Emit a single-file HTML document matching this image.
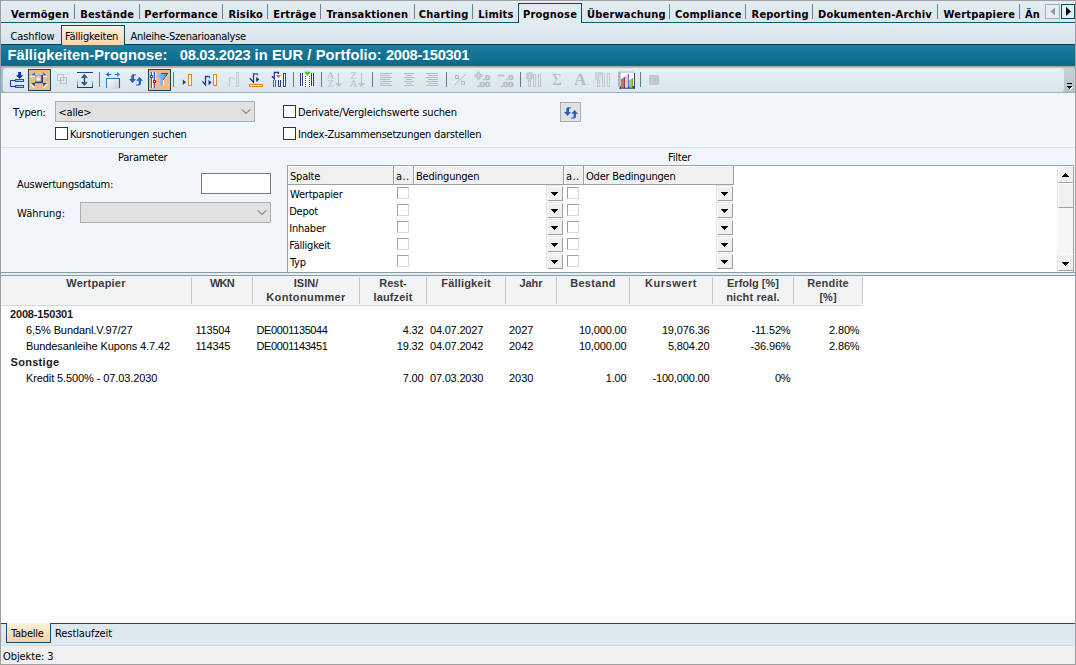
<!DOCTYPE html>
<html lang="de">
<head>
<meta charset="utf-8">
<title>Fälligkeiten-Prognose</title>
<style>
*{box-sizing:border-box;margin:0;padding:0}
html,body{width:1076px;height:665px;overflow:hidden}
body{position:relative;background:#f1f6fa;font-family:"DejaVu Sans Condensed","Liberation Sans",sans-serif;font-size:11px;letter-spacing:-0.22px;color:#000;line-height:13px}
.abs{position:absolute}
.t{position:absolute;white-space:pre}
/* frame */
#bl{left:0;top:0;width:1px;height:665px;background:#989ea2}
#bt{left:0;top:0;width:1076px;height:1px;background:#a0a0a0}
#br{left:1075px;top:0;width:1px;height:665px;background:#a0a0a0}
#bb{left:0;top:664px;width:1076px;height:1px;background:#a0a0a0}
/* main tabs */
#tabs{left:1px;top:1px;width:1074px;height:21px;background:linear-gradient(#e3edf2,#dbe7ed)}
#tabline{left:1px;top:22px;width:1074px;height:1px;background:#0f5a70}
.mt{position:absolute;top:8px;font-weight:bold;letter-spacing:0.2px;white-space:pre}
.ms{position:absolute;top:4px;width:1px;height:15px;background:#68848f}
#seltab{left:518px;top:3px;width:64px;height:20px;background:linear-gradient(#dfeaef,#e2edf2);border:1px solid #0f4a5c;border-bottom:none}
/* sub tabs */
#sub{left:1px;top:23px;width:1074px;height:21px;background:linear-gradient(#e2edf2,#d6e3ea)}
#subsel{left:61px;top:25px;width:64px;height:20px;border:1px solid #0f4a5c;border-bottom:none;background:linear-gradient(#fdf3e3,#f8d2ae)}
/* title */
#title{left:1px;top:44px;width:1074px;height:22px;background:linear-gradient(#1f7c9c,#066a8b);border-top:1px solid #06425c}
#title span{position:absolute;left:6.4px;top:1.6px;font-family:"Liberation Sans",sans-serif;font-weight:bold;font-size:14.67px;letter-spacing:0;color:#fff;white-space:pre;line-height:17px}
/* toolbar */
#tbbg{left:1px;top:66px;width:1074px;height:27px;background:#9dbfcf;border-top:1px solid #a9afb2}
#tb{left:3px;top:68px;width:1061px;height:24px;background:linear-gradient(#e6eff4,#dae6ed);border-radius:3px}
#tbov{left:1062px;top:68px;width:13px;height:24px;background:linear-gradient(#c6d2d8,#b4c0c6);border-radius:0 3px 3px 0}
#tbline{left:1px;top:92px;width:1074px;height:1px;background:#a3b1b9}
.sep{position:absolute;top:71px;width:1px;height:18px;background:#5f7f8c}
.ic{position:absolute;top:72px;width:16px;height:16px}
.selb{position:absolute;top:69px;width:23px;height:22px;background:#f2b988;border:1px solid #0f4a5c}

.cb{position:absolute;width:13px;height:13px;background:#fff;border:1px solid #333}
.combo{position:absolute;background:#e1e1e1;border:1px solid #adadad}
.hline{position:absolute;height:1px;background:#d5dee2}
#grid{left:287px;top:165px;width:787px;height:107px;border-right:1px solid #a0a0a0;background:#fff;border-left:1px solid #a0a0a0;border-top:1px solid #a0a0a0}
.gh{position:absolute;top:166px;height:19px;background:#f0f0f0;border-right:1px solid #a0a0a0;border-bottom:1px solid #a0a0a0;box-shadow:inset 1px 1px 0 #fff;padding:5px 0 0 2px;line-height:11px;white-space:pre;overflow:hidden}
.gt{position:absolute;left:290px;white-space:pre}
.gc{position:absolute;width:12px;height:12px;background:#fff;border:1px solid #d9d9d9;border-top-color:#a0a0a0;border-left-color:#a0a0a0}
.gd{position:absolute;width:16px;height:15px;background:#f0f0f0;border:1px solid #a0a0a0;border-top-color:#fff;border-left-color:#fff;box-shadow:-1px -1px 0 #e3e3e3}
.gd:after{content:"";position:absolute;left:3px;top:5px;width:7px;height:4px;background:linear-gradient(#000,#000) 0 0/7px 1px no-repeat,linear-gradient(#000,#000) 1px 1px/5px 1px no-repeat,linear-gradient(#000,#000) 2px 2px/3px 1px no-repeat,linear-gradient(#000,#000) 3px 3px/1px 1px no-repeat}
#sbu,#thumb,#sbd{box-shadow:-1px 0 0 #e3e3e3}#sbu:after{left:3px;top:6px;transform:scaleY(-1)}#sbd:after{left:3px;top:7px}
#thumb:after{display:none}
#split1{left:1px;top:272px;width:1074px;height:1px;background:#8b9a9f}
#split2{left:1px;top:273px;width:1074px;height:2px;background:#e3eef4}
#split3{left:1px;top:275px;width:1074px;height:1px;background:#8e9da3}
#tbl{left:1px;top:276px;width:1074px;height:347px;background:#fff}
#thead{left:1px;top:276px;width:862px;height:29px;background:#f2f3f5}
#theadline{left:1px;top:305px;width:862px;height:1px;background:#d5d8da}
.th{position:absolute;font-family:"Liberation Sans",sans-serif;font-weight:bold;font-size:11px;letter-spacing:0;color:#3c3c3c;text-align:center;white-space:pre;line-height:14px;top:276px}
.cs{position:absolute;top:277px;width:1px;height:27px;background:#c6c6c6}
.td{position:absolute;font-family:"Liberation Sans",sans-serif;font-size:11px;letter-spacing:0;color:#000;white-space:pre;line-height:14px}
.gr{font-weight:bold;color:#1a1a1a}
#btabs{left:1px;top:623px;width:1074px;height:22px;background:#dde9ef;border-top:1px solid #0f5068}
#bsel{left:6px;top:623px;width:45px;height:20px;border:1px solid #0f5068;border-top:none;background:linear-gradient(#fdf1de,#f8cfa6)}
#status{left:1px;top:645px;width:1074px;height:19px;background:#f0f0f0;border-top:1px solid #d9dcde}
</style>
</head>
<body>
<div class="abs" id="tabs"></div>
<div class="abs" id="tabline"></div>
<div class="abs" id="sub"></div>
<div class="abs" id="seltab"></div>
<div class="abs" id="title"><span><b style="letter-spacing:0.1px">Fälligkeiten-Prognose:</b>   <b style="letter-spacing:-0.28px">08.03.2023</b><b style="letter-spacing:0.1px"> in EUR / Portfolio: </b><b style="letter-spacing:-0.3px">2008-150301</b></span></div>
<div class="abs" id="subsel"></div>
<div class="abs" id="tbbg"></div>
<div class="abs" id="tbov"></div><div class="abs" id="tb"></div>
<div class="abs" id="tbline"></div>
<span class="mt" style="left:11.0px">Vermögen</span>
<span class="mt" style="left:80.2px">Bestände</span>
<span class="mt" style="left:144.3px">Performance</span>
<span class="mt" style="left:228.4px">Risiko</span>
<span class="mt" style="left:273.2px">Erträge</span>
<span class="mt" style="left:326.5px">Transaktionen</span>
<span class="mt" style="left:418.8px">Charting</span>
<span class="mt" style="left:478.3px">Limits</span>
<span class="mt" style="left:523px">Prognose</span>
<span class="mt" style="left:587.0px">Überwachung</span>
<span class="mt" style="left:675.0px">Compliance</span>
<span class="mt" style="left:751.6px">Reporting</span>
<span class="mt" style="left:818.0px">Dokumenten-Archiv</span>
<span class="mt" style="left:943.5px">Wertpapiere</span>
<span class="mt" style="left:1025.0px">Än</span>
<div class="ms" style="left:74px"></div>
<div class="ms" style="left:139px"></div>
<div class="ms" style="left:222px"></div>
<div class="ms" style="left:267px"></div>
<div class="ms" style="left:320px"></div>
<div class="ms" style="left:414px"></div>
<div class="ms" style="left:472px"></div>
<div class="ms" style="left:669px"></div>
<div class="ms" style="left:745px"></div>
<div class="ms" style="left:812px"></div>
<div class="ms" style="left:937px"></div>
<div class="ms" style="left:1019px"></div>
<span class="t" style="left:10.5px;top:30px;letter-spacing:-0.1px">Cashflow</span>
<span class="t" style="left:65px;top:30px">Fälligkeiten</span>
<span class="t" style="left:130.5px;top:30px;letter-spacing:-0.27px">Anleihe-Szenarioanalyse</span>
<div class="abs" style="left:1045px;top:4px;width:15px;height:15px;border:1px solid #a8b0b4;background:#e4edf2"></div>
<div class="abs" style="left:1061px;top:4px;width:14px;height:15px;border:1px solid #0f4a5c;background:#e4edf2"></div>
<svg class="abs" style="left:1045px;top:4px" width="30" height="15" viewBox="0 0 30 15"><path d="M10 3.5 L5.5 7.5 L10 11.5Z" fill="#9a9a9a"/><path d="M21 3 L26 7.5 L21 12Z" fill="#000"/></svg>

<div class="selb" style="left:28px"></div>
<div class="selb" style="left:148px"></div>
<svg class="abs" style="left:0;top:0" width="1076" height="100" viewBox="0 0 1076 100" shape-rendering="auto">
<defs>
<linearGradient id="gbar" x1="0" y1="0" x2="1" y2="0"><stop offset="0" stop-color="#7db8ff"/><stop offset="1" stop-color="#c4e2ff"/></linearGradient>
<linearGradient id="gsq" x1="0" y1="0" x2="1" y2="1"><stop offset="0" stop-color="#8f9bb5"/><stop offset="0.5" stop-color="#e6e9f2"/><stop offset="1" stop-color="#aab3c8"/></linearGradient>
<linearGradient id="gbox" x1="0" y1="0" x2="1" y2="1"><stop offset="0" stop-color="#ffffff"/><stop offset="1" stop-color="#c9cbe0"/></linearGradient>
<linearGradient id="gfun" x1="0" y1="0" x2="1" y2="0"><stop offset="0" stop-color="#a8d4fa"/><stop offset="1" stop-color="#4a8cd8"/></linearGradient>
<linearGradient id="gfade" x1="0" y1="0" x2="0" y2="1"><stop offset="0" stop-color="#c9d6ee"/><stop offset="1" stop-color="#1f3a6e"/></linearGradient>
<radialGradient id="gsq2" cx="0.55" cy="0.6" r="0.7"><stop offset="0" stop-color="#ffffff"/><stop offset="0.5" stop-color="#c4cbdc"/><stop offset="1" stop-color="#8e9abb"/></radialGradient>
<linearGradient id="gtri" x1="0" y1="0" x2="0" y2="1"><stop offset="0" stop-color="#2f9fdc"/><stop offset="0.7" stop-color="#2a78b0"/><stop offset="1" stop-color="#22406f"/></linearGradient>
<linearGradient id="gtri2" x1="0" y1="0" x2="0" y2="1"><stop offset="0" stop-color="#243f70"/><stop offset="0.35" stop-color="#2a5f98"/><stop offset="1" stop-color="#2f9fdc"/></linearGradient>
<linearGradient id="garr" x1="0" y1="0" x2="1" y2="0"><stop offset="0" stop-color="#253c6a"/><stop offset="1" stop-color="#2b82ba"/></linearGradient>
<linearGradient id="gbx" gradientUnits="userSpaceOnUse" x1="106" y1="0" x2="120" y2="0"><stop offset="0" stop-color="#2a86d8"/><stop offset="1" stop-color="#2a58a8"/></linearGradient>
<linearGradient id="gsqrt" gradientUnits="userSpaceOnUse" x1="202" y1="0" x2="210" y2="0"><stop offset="0" stop-color="#1f3a80"/><stop offset="0.6" stop-color="#1f3f88"/><stop offset="1" stop-color="#2a86b8"/></linearGradient>
<linearGradient id="gsqrt2" gradientUnits="userSpaceOnUse" x1="249" y1="0" x2="258" y2="0"><stop offset="0" stop-color="#1f3a80"/><stop offset="0.6" stop-color="#1f3f88"/><stop offset="1" stop-color="#2a86b8"/></linearGradient>
</defs>
<!-- separators -->
<g fill="#5a7f8c">
<rect x="99" y="72" width="1" height="15"/><rect x="173" y="72" width="1" height="15"/><rect x="293" y="72" width="1" height="15"/><rect x="321" y="72" width="1" height="15"/><rect x="372" y="72" width="1" height="15"/><rect x="446" y="72" width="1" height="15"/><rect x="520" y="72" width="1" height="15"/><rect x="640" y="72" width="1" height="15"/>
</g>
<!-- icon1 -->
<g>
<path d="M18.2 72h2.8v3.2h2.3l-3.7 3.6L15.9 75.2h2.3z" fill="#0c2cb0"/>
<path d="M15.5 80.5H10.5V86.5H15.5" fill="none" stroke="#1030b8" stroke-width="1"/>
<rect x="15.5" y="79.5" width="8" height="2" fill="url(#gbar)" stroke="#1f4fd0" stroke-width="1"/>
<rect x="15.5" y="85.5" width="8" height="2" fill="url(#gbar)" stroke="#1f4fd0" stroke-width="1"/>
</g>
<!-- icon2 -->
<g>
<rect x="35" y="75" width="8" height="8.2" fill="#2b4070"/>
<rect x="35" y="75" width="6.3" height="6.6" fill="url(#gsq2)"/>
<path d="M35 72v3.6h-3.9z" fill="url(#gtri)"/><path d="M43 72v3.6h3.9z" fill="url(#gtri)"/>
<rect x="31" y="75.6" width="4" height="1.2" fill="#fff"/><rect x="43" y="75.6" width="4" height="1.2" fill="#fff"/>
<path d="M31 83h4v4.3z" fill="url(#gtri2)"/><path d="M47 83h-4v4.3z" fill="url(#gtri2)"/>
<path d="M30.8 83.9l3.9 4.1M47.2 83.9l-3.9 4.1" stroke="#fff" stroke-width="1.2"/>
</g>
<!-- icon3 disabled -->
<g fill="none" stroke="#b9c1c5" stroke-width="1">
<rect x="57.5" y="74.5" width="6" height="6"/><rect x="60.5" y="77.5" width="6" height="6"/>
<path d="M56 72.5l1.2 1.2M68 72.5l-1.2 1.2M56 86l1.2-1.2M68 86l-1.2-1.2" stroke="#c9d0d3"/>
</g>
<!-- icon4 -->
<g>
<rect x="77" y="72" width="16" height="1" fill="#27406f"/>
<path d="M84.5 73.8l3.5 4.2h-2.7v4h2.7l-3.5 4l-3.5-4h2.7v-4h-2.7z" fill="url(#garr)"/>
<rect x="77" y="80" width="1" height="8" fill="url(#gfade)"/><rect x="92" y="80" width="1" height="8" fill="url(#gfade)"/>
<rect x="77" y="87" width="16" height="1" fill="#1f3a6e"/>
</g>
<!-- icon5 -->
<g>
<rect x="106.5" y="78.5" width="13" height="10" fill="url(#gbox)" stroke="none"/>
<path d="M106.5 88V78.5H119.5V88" fill="none" stroke="url(#gbx)" stroke-width="1.1"/>
<path d="M106 74.5l2.8-2.5v2h2.4v1h-2.4v2z" fill="#2a5cc4"/>
<path d="M120 74.5l-2.8-2.5v2h-2.4v1h2.4v2z" fill="#2a7cd8"/>
</g>
<!-- icon6 -->
<g fill="#2a5cc8" transform="translate(-435,-33)"><path d="M571 107.3H568.3Q566.3 107.3 566.3 109.3V112H564L567.5 116L571 112H569V109.5Q569 108.4 570 108.3H571Z"/><path d="M571 118.5H573.8Q576 118.5 576 116.3V113.7H578L574.6 110L571.2 113.7H573.7V116.3Q573.7 117.4 572.7 117.5H571Z"/></g>
<!-- icon7 -->
<g>
<path d="M152.5 72v16M155.5 72v11" stroke="#fff" stroke-width="0.8"/>
<path d="M151.5 72v16M154.5 72v16" stroke="#2a5fd0" stroke-width="1"/>
<path d="M168.7 73.7L163.4 80.7V85" fill="none" stroke="#fff" stroke-width="0.9"/>
<path d="M155 73H168L163 80V84.5L161.5 86L160.3 84.8V80Z" fill="url(#gfun)"/>
<path d="M161 73.4H168L163.2 80" fill="none" stroke="#2b4a80" stroke-width="0.9"/>
<rect x="150.5" y="75.5" width="2" height="2" fill="#fff" stroke="#2a5fd0" stroke-width="1"/>
<rect x="153.5" y="80.5" width="2" height="2" fill="#fff" stroke="#e81010" stroke-width="1"/>
</g>
<!-- icon8 -->
<g>
<path d="M182.8 79.5l3.2 2.750l-3.2 2.750z" fill="#26366e"/>
<rect x="188.5" y="74.5" width="3" height="11" fill="#fff" stroke="#e8820c" stroke-width="1"/>
</g>
<!-- icon9 -->
<g>
<path d="M202.4 81.3L205.5 85V76.5H209.5V78.2" fill="none" stroke="url(#gsqrt)" stroke-width="1.3"/>
<path d="M208.5 79.8l3.2 2.700l-3.2 2.700z" fill="#26366e"/>
<rect x="213.5" y="74.5" width="3" height="11" fill="#fff" stroke="#e8820c" stroke-width="1"/>
</g>
<!-- icon10 disabled -->
<g fill="none" stroke="#c3cacd" stroke-width="1">
<path d="M226.3 82.5L229.5 86.3V77.9H233.5V79.5"/><rect x="236.5" y="72.5" width="2" height="14"/>
</g>
<!-- icon11 -->
<g>
<path d="M249.8 78.3L253.5 82.3V73.9H257.5V75.6" fill="none" stroke="url(#gsqrt2)" stroke-width="1.3"/>
<path d="M256.2 76.8l3.2 2.700l-3.2 2.700z" fill="#26366e"/>
<rect x="249.5" y="84.5" width="13" height="2" fill="#fff" stroke="#e8820c" stroke-width="1"/>
</g>
<!-- icon12 -->
<g>
<rect x="272" y="71.5" width="10" height="8.5" fill="#f6f6fb"/>
<path d="M272 76.3L274.3 78.8V72.5H278.5V74" fill="none" stroke="#1a30b0" stroke-width="1.3"/>
<path d="M276 75h5l-2.5 3z" fill="#d86a10"/>
<path d="M273.5 80v7M275.5 80v7" stroke="#4a6496" stroke-width="1"/>
<path d="M278.5 80v6.5h2V80" fill="none" stroke="#2b3a78"/>
<rect x="283.5" y="73.5" width="2" height="13" fill="#fff" stroke="#3a4c88"/>
</g>
<!-- icon13 -->
<g>
<rect x="300" y="73" width="14" height="14" fill="#fff"/>
<path d="M300.5 73v13M302.5 73v13M311.5 73v13M313.5 73v13" stroke="#2b3a70" stroke-width="1"/>
<path d="M305.5 76v11M309.5 76v11" stroke="#2b3a70" stroke-width="1" stroke-dasharray="1 1"/>
<path d="M304 71.8h7l-3.5 4.200z" fill="#4cc828"/>
</g>
<!-- icon14/15 disabled sort -->
<g fill="#b9c1c4" font-family="Liberation Serif, serif" font-size="10.5">
<text x="326.8" y="78.8">A</text><text x="327.6" y="86.8" font-size="10">Z</text>
<path d="M338 73h1v10.3h3l-3.5 3.7l-3.5-3.7h3z"/>
<text x="350.5" y="79" font-size="10">Z</text><text x="349.8" y="86.8">A</text>
<path d="M361 73h1v10.3h3l-3.5 3.7l-3.5-3.7h3z"/>
</g>
<!-- align icons -->
<g stroke="#b3bbbf" stroke-width="1">
<path d="M380 73.5h12M380 75.5h10M380 77.5h12M380 79.5h10M380 81.5h12M380 83.5h10M380 85.5h12"/>
<path d="M404 73.5h10M406 75.5h6M404 77.5h10M406 79.5h6M404 81.5h10M406 83.5h6M404 85.5h10"/>
<path d="M426 73.5h12M428 75.5h10M426 77.5h12M428 79.5h10M426 81.5h12M428 83.5h10M426 85.5h12"/>
</g>
<!-- percent -->
<g fill="none" stroke="#b3bbbf" stroke-width="1">
<rect x="455.5" y="75.5" width="3" height="3"/><rect x="461.5" y="81.5" width="3" height="3"/><path d="M454 85.5l12-11.5"/>
</g>
<!-- +.0 / -.0 -->
<g fill="#b2babe" stroke="#b2babe" stroke-width="0.35" font-family="Liberation Sans, sans-serif" font-size="8" font-weight="bold">
<path d="M477.3 72.2h2.4v2.3h2.3v2.4h-2.3v2.3h-2.4v-2.3h-2.3v-2.4h2.3z" fill="#cdd4d8" stroke="#b4bcc0" stroke-width="0.9"/>
<text x="482.6" y="79.7" textLength="7.4" lengthAdjust="spacingAndGlyphs">.0</text><text x="477" y="86.8" textLength="13" lengthAdjust="spacingAndGlyphs">.00</text>
<rect x="498" y="74.5" width="6.6" height="2.2" fill="#c3cacd" stroke="none"/>
<text x="505.8" y="79.7" textLength="7.4" lengthAdjust="spacingAndGlyphs">.0</text><text x="500.2" y="86.8" textLength="13" lengthAdjust="spacingAndGlyphs">.00</text>
</g>
<!-- icon22 lock -->
<g fill="none" stroke="#c0c7ca" stroke-width="1">
<ellipse cx="529.5" cy="76" rx="3.6" ry="4" fill="#c3cacd" stroke="none"/><rect x="529" y="74.5" width="1" height="3.5" fill="#dfe6ea" stroke="none"/>
<rect x="528.5" y="80.5" width="2" height="6"/><rect x="533.5" y="74.5" width="2" height="12"/><rect x="538.5" y="74.5" width="2" height="12"/>
</g>
<!-- sigma, A -->
<g fill="#b4bcc0" font-family="Liberation Serif, serif">
<text x="552" y="85" font-size="16" textLength="9.5" lengthAdjust="spacingAndGlyphs">Σ</text>
<text x="574" y="85.4" font-size="17" font-weight="bold">A</text>
</g>
<!-- icon25 -->
<g fill="none" stroke="#c4cbce" stroke-width="1">
<rect x="595" y="72" width="8" height="8" fill="#ccd3d6" stroke="none"/><rect x="599" y="76" width="4" height="4" fill="#dbe1e4" stroke="none"/>
<rect x="597.5" y="80.5" width="2" height="6"/><rect x="602.5" y="73.5" width="2" height="13"/><rect x="607.5" y="73.5" width="2" height="13"/>
</g>
<!-- icon26 chart -->
<g>
<rect x="618" y="72" width="17" height="16.5" fill="#fff"/>
<rect x="618" y="72" width="2.7" height="15" fill="#a9b5cc"/>
<path d="M618 72.2h16.5" stroke="#9aa6bf" stroke-width="0.7"/>
<path d="M634.5 73v15.5" stroke="#33477c" stroke-width="1"/>
<path d="M618.6 88.7l2-2.7h14.400v2.7z" fill="#2b3f78"/>
<path d="M621 79.2l3-2v10.6h-3z" fill="#dc6660"/><path d="M624 77.2l0.9-0.2v10.8h-0.9z" fill="#a82424"/>
<path d="M625 76.2l3-2.2v13.8h-3z" fill="#c6cef0"/><path d="M628 74l0.8 0.2v13.6h-0.8z" fill="#3454c4"/>
<path d="M629.2 80.2l3-2v9.6h-3z" fill="#aac450"/><path d="M632.2 78.2l0.9-0.2v9.8h-0.9z" fill="#6f8a20"/>
</g>
<!-- icon27 -->
<rect x="649" y="75" width="10" height="10" rx="1.5" fill="#c2c9cb"/>
<!-- overflow -->
<path d="M1068 87h5v1h-1v1h-1v1h-1v-1h-1v-1h-1z" fill="#fff"/><rect x="1067" y="83" width="5" height="1" fill="#000"/><path d="M1067 86h5v1h-1v1h-1v1h-1v-1h-1v-1h-1z" fill="#000"/>
</svg>
<span class="t" style="left:13px;top:106px;font-kerning:none">Typen:</span>
<div class="combo" style="left:55px;top:101px;width:200px;height:21px"></div>
<span class="t" style="left:58.5px;top:106px">&lt;alle&gt;</span>
<svg class="abs" style="left:241px;top:108px" width="10" height="7" viewBox="0 0 10 7"><path d="M1 1.5l4 4l4-4" fill="none" stroke="#444" stroke-width="0.95"/></svg>
<div class="cb" style="left:55px;top:127px"></div>
<span class="t" style="left:70px;top:128px;letter-spacing:-0.17px">Kursnotierungen suchen</span>
<div class="cb" style="left:283px;top:105px"></div>
<span class="t" style="left:298px;top:106px;letter-spacing:-0.14px">Derivate/Vergleichswerte suchen</span>
<div class="cb" style="left:283px;top:127px"></div>
<span class="t" style="left:298px;top:128px">Index-Zusammensetzungen darstellen</span>
<div class="combo" style="left:560px;top:102px;width:21px;height:20px"></div>
<svg class="abs" style="left:560px;top:102px" width="21" height="20" viewBox="560 102 21 20"><g fill="#2a5cc8"><path d="M571 107.3H568.3Q566.3 107.3 566.3 109.3V112H564L567.5 116L571 112H569V109.5Q569 108.4 570 108.3H571Z"/><path d="M571 118.5H573.8Q576 118.5 576 116.3V113.7H578L574.6 110L571.2 113.7H573.7V116.3Q573.7 117.4 572.7 117.5H571Z"/></g></svg>
<div class="hline" style="left:1px;top:147px;width:1074px"></div>
<span class="t" style="left:118px;top:151px">Parameter</span>
<span class="t" style="left:668px;top:151px">Filter</span>
<span class="t" style="left:17px;top:178px">Auswertungsdatum:</span>
<div class="abs" style="left:201px;top:173px;width:70px;height:21px;background:#fff;border:1px solid #7a7a7a"></div>
<span class="t" style="left:17px;top:207px;letter-spacing:0.05px">Währung:</span>
<div class="combo" style="left:80px;top:202px;width:191px;height:21px"></div>
<svg class="abs" style="left:257px;top:209px" width="10" height="7" viewBox="0 0 10 7"><path d="M1 1.5l4 4l4-4" fill="none" stroke="#444" stroke-width="0.95"/></svg>
<div class="abs" id="grid"></div>
<div class="gh" style="left:288px;width:106px">Spalte</div>
<div class="gh" style="left:394px;width:20px;letter-spacing:0.4px">a..</div>
<div class="gh" style="left:414px;width:150px">Bedingungen</div>
<div class="gh" style="left:564px;width:20px;letter-spacing:0.4px">a..</div>
<div class="gh" style="left:584px;width:150px">Oder Bedingungen</div>
<span class="gt" style="top:188px">Wertpapier</span>
<span class="gt" style="top:205px;left:289.2px">Depot</span>
<span class="gt" style="top:222px;left:289.2px">Inhaber</span>
<span class="gt" style="top:239px;left:289.2px">Fälligkeit</span>
<span class="gt" style="top:256px">Typ</span>
<div class="gc" style="left:397px;top:187px"></div><div class="gc" style="left:567px;top:187px"></div><div class="gd" style="left:547px;top:186px"></div><div class="gd" style="left:717px;top:186px"></div>
<div class="gc" style="left:397px;top:204px"></div><div class="gc" style="left:567px;top:204px"></div><div class="gd" style="left:547px;top:203px"></div><div class="gd" style="left:717px;top:203px"></div>
<div class="gc" style="left:397px;top:221px"></div><div class="gc" style="left:567px;top:221px"></div><div class="gd" style="left:547px;top:220px"></div><div class="gd" style="left:717px;top:220px"></div>
<div class="gc" style="left:397px;top:238px"></div><div class="gc" style="left:567px;top:238px"></div><div class="gd" style="left:547px;top:237px"></div><div class="gd" style="left:717px;top:237px"></div>
<div class="gc" style="left:397px;top:255px"></div><div class="gc" style="left:567px;top:255px"></div><div class="gd" style="left:547px;top:254px"></div><div class="gd" style="left:717px;top:254px"></div>

<div class="abs" style="left:1057px;top:166px;width:16px;height:105px;background:conic-gradient(#fff 25%,#efefef 0 50%,#fff 0 75%,#efefef 0) 0 0/2px 2px"></div>
<div class="gd" style="left:1058px;top:166px;height:17px" id="sbu"></div>
<div class="gd" style="left:1058px;top:183px;height:25px" id="thumb"></div>
<div class="gd" style="left:1058px;top:254px;height:17px" id="sbd"></div>
<div class="abs" id="split1"></div><div class="abs" id="split2"></div><div class="abs" id="split3"></div>
<div class="abs" id="tbl"></div><div class="abs" id="thead"></div><div class="abs" id="theadline"></div>
<div class="th" style="left:1px;width:190px"><span style="letter-spacing:0.2px">Wertpapier</span></div><div class="cs" style="left:191px"></div>
<div class="th" style="left:192px;width:60px"><span style="letter-spacing:-0.7px">WKN</span></div><div class="cs" style="left:252px"></div>
<div class="th" style="left:253px;width:106px">ISIN/<br><span style="letter-spacing:0.4px">Kontonummer</span></div><div class="cs" style="left:359px"></div>
<div class="th" style="left:360px;width:66px">Rest-<br><span style="letter-spacing:0.15px">laufzeit</span></div><div class="cs" style="left:426px"></div>
<div class="th" style="left:427px;width:78px"><span style="letter-spacing:0.18px">Fälligkeit</span></div><div class="cs" style="left:505px"></div>
<div class="th" style="left:506px;width:50px">Jahr</div><div class="cs" style="left:556px"></div>
<div class="th" style="left:557px;width:72px"><span style="letter-spacing:0.33px">Bestand</span></div><div class="cs" style="left:629px"></div>
<div class="th" style="left:630px;width:82px"><span style="letter-spacing:0.55px">Kurswert</span></div><div class="cs" style="left:712px"></div>
<div class="th" style="left:713px;width:80px">Erfolg [%]<br><span style="letter-spacing:0.15px">nicht real.</span></div><div class="cs" style="left:793px"></div>
<div class="th" style="left:794px;width:68px"><span style="letter-spacing:0.2px">Rendite</span><br>[%]</div><div class="cs" style="left:862px"></div>
<span class="td gr" style="left:10px;letter-spacing:-0.17px;top:307px">2008-150301</span>
<span class="td " style="left:26px;letter-spacing:-0.1px;top:323px">6,5% Bundanl.V.97/27</span><span class="td " style="left:195.5px;letter-spacing:-0.2px;top:323px">113504</span><span class="td " style="left:256.5px;letter-spacing:-0.38px;top:323px">DE0001135044</span><span class="td" style="right:652.5px;letter-spacing:-0.15px;top:323px">4.32</span><span class="td " style="left:430px;letter-spacing:-0.2px;top:323px">04.07.2027</span><span class="td " style="left:509px;top:323px">2027</span><span class="td" style="right:449.5px;letter-spacing:-0.15px;top:323px">10,000.00</span><span class="td" style="right:366.5px;letter-spacing:-0.15px;top:323px">19,076.36</span><span class="td" style="right:285.5px;letter-spacing:-0.15px;top:323px">-11.52%</span><span class="td" style="right:216.5px;letter-spacing:-0.15px;top:323px">2.80%</span>
<span class="td " style="left:26px;letter-spacing:-0.1px;top:339px">Bundesanleihe Kupons 4.7.42</span><span class="td " style="left:195.5px;letter-spacing:-0.2px;top:339px">114345</span><span class="td " style="left:256.5px;letter-spacing:-0.38px;top:339px">DE0001143451</span><span class="td" style="right:652.5px;letter-spacing:-0.15px;top:339px">19.32</span><span class="td " style="left:430px;letter-spacing:-0.2px;top:339px">04.07.2042</span><span class="td " style="left:509px;top:339px">2042</span><span class="td" style="right:449.5px;letter-spacing:-0.15px;top:339px">10,000.00</span><span class="td" style="right:366.5px;letter-spacing:-0.15px;top:339px">5,804.20</span><span class="td" style="right:285.5px;letter-spacing:-0.15px;top:339px">-36.96%</span><span class="td" style="right:216.5px;letter-spacing:-0.15px;top:339px">2.86%</span>
<span class="td gr" style="left:10.5px;letter-spacing:0.3px;top:355px">Sonstige</span>
<span class="td " style="left:26px;letter-spacing:-0.1px;top:371px">Kredit 5.500% - 07.03.2030</span><span class="td" style="right:652.5px;letter-spacing:-0.15px;top:371px">7.00</span><span class="td " style="left:430px;letter-spacing:-0.2px;top:371px">07.03.2030</span><span class="td " style="left:509px;top:371px">2030</span><span class="td" style="right:449.5px;letter-spacing:-0.15px;top:371px">1.00</span><span class="td" style="right:366.5px;letter-spacing:-0.15px;top:371px">-100,000.00</span><span class="td" style="right:285.5px;letter-spacing:-0.15px;top:371px">0%</span>
<div class="abs" id="btabs"></div><div class="abs" id="bsel"></div><div class="abs" id="status"></div>
<span class="t" style="left:11px;top:627px">Tabelle</span>
<span class="t" style="left:55px;top:627px;letter-spacing:-0.08px">Restlaufzeit</span>
<span class="t" style="left:3px;top:650px;letter-spacing:-0.08px">Objekte: 3</span>
<div class="abs" id="bl"></div><div class="abs" id="bt"></div><div class="abs" id="br"></div><div class="abs" id="bb"></div>
</body>
</html>
